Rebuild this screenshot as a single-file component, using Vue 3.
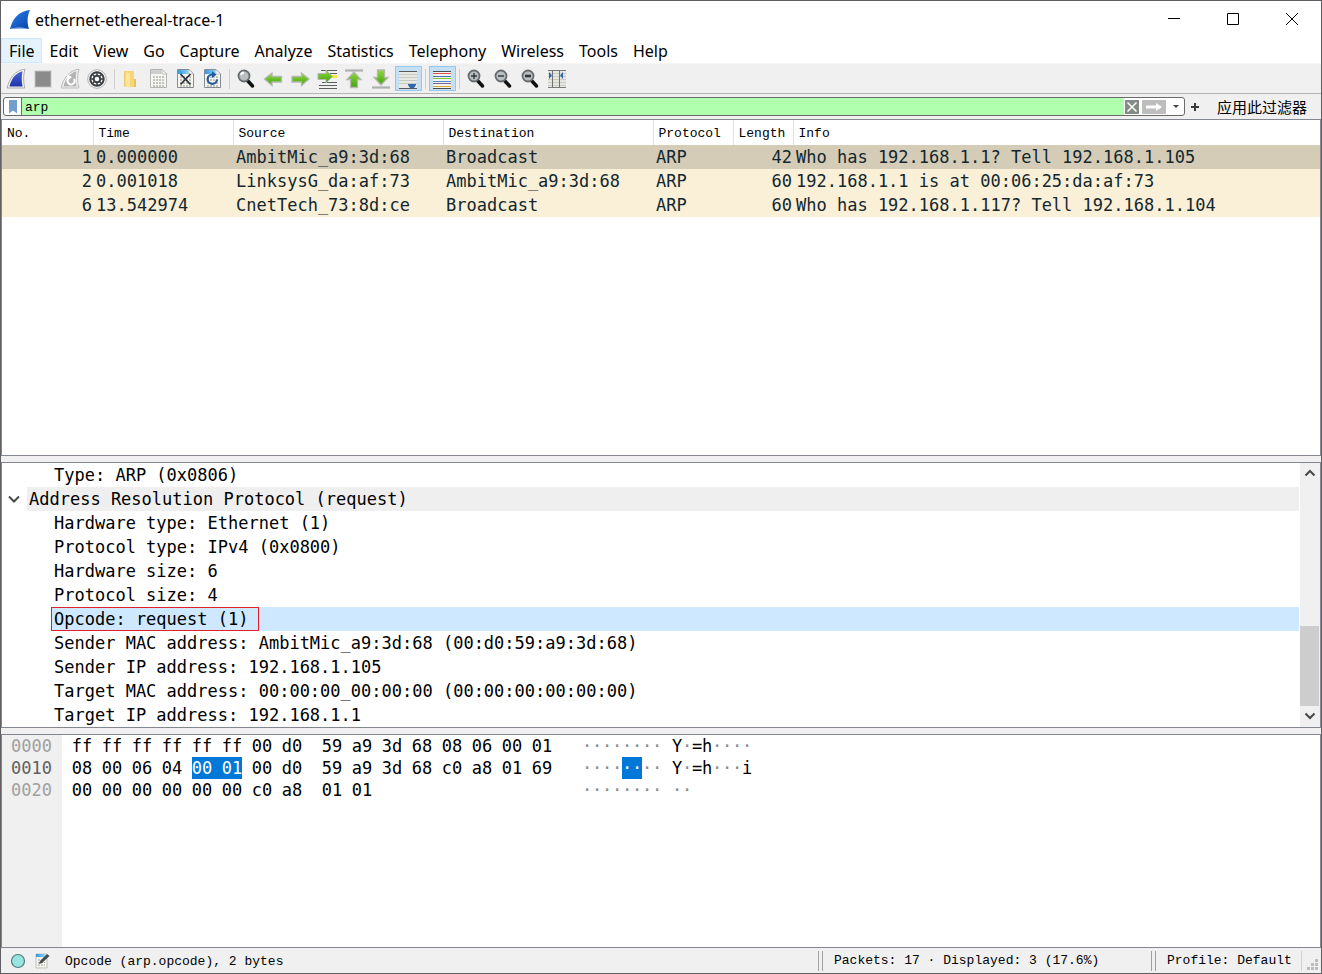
<script setup>
import { ref } from 'vue'

const menus = ['File', 'Edit', 'View', 'Go', 'Capture', 'Analyze', 'Statistics', 'Telephony', 'Wireless', 'Tools', 'Help']

const toolGroups = [
  [
    { id: 'start', label: 'Start capture' },
    { id: 'stop', label: 'Stop capture' },
    { id: 'restart', label: 'Restart capture' },
    { id: 'options', label: 'Capture options' },
  ],
  [
    { id: 'open', label: 'Open file' },
    { id: 'save', label: 'Save file' },
    { id: 'close', label: 'Close file' },
    { id: 'reload', label: 'Reload file' },
  ],
  [
    { id: 'find', label: 'Find packet' },
    { id: 'back', label: 'Previous packet' },
    { id: 'forward', label: 'Next packet' },
    { id: 'goto', label: 'Go to packet' },
    { id: 'first', label: 'First packet' },
    { id: 'last', label: 'Last packet' },
    { id: 'autoscroll', label: 'Auto scroll', on: true },
  ],
  [{ id: 'colorize', label: 'Colorize', on: true }],
  [
    { id: 'zoomin', label: 'Zoom in' },
    { id: 'zoomout', label: 'Zoom out' },
    { id: 'zoomreset', label: 'Normal size' },
    { id: 'columns', label: 'Resize columns' },
  ],
]

const filter = ref('arp')

const packets = [
  { no: 1, time: '0.000000', src: 'AmbitMic_a9:3d:68', dst: 'Broadcast', proto: 'ARP', len: 42, info: 'Who has 192.168.1.1? Tell 192.168.1.105', selected: true },
  { no: 2, time: '0.001018', src: 'LinksysG_da:af:73', dst: 'AmbitMic_a9:3d:68', proto: 'ARP', len: 60, info: '192.168.1.1 is at 00:06:25:da:af:73' },
  { no: 6, time: '13.542974', src: 'CnetTech_73:8d:ce', dst: 'Broadcast', proto: 'ARP', len: 60, info: 'Who has 192.168.1.117? Tell 192.168.1.104' },
]

const details = [
  { text: 'Type: ARP (0x0806)' },
  { text: 'Address Resolution Protocol (request)', head: true },
  { text: 'Hardware type: Ethernet (1)' },
  { text: 'Protocol type: IPv4 (0x0800)' },
  { text: 'Hardware size: 6' },
  { text: 'Protocol size: 4' },
  { text: 'Opcode: request (1)', selected: true },
  { text: 'Sender MAC address: AmbitMic_a9:3d:68 (00:d0:59:a9:3d:68)' },
  { text: 'Sender IP address: 192.168.1.105' },
  { text: 'Target MAC address: 00:00:00_00:00:00 (00:00:00:00:00:00)' },
  { text: 'Target IP address: 192.168.1.1' },
]

const markFrom = 20
const markTo = 21

const dump = [
  { hex: 'ff ff ff ff ff ff 00 d0 59 a9 3d 68 08 06 00 01', ascii: '········Y·=h····' },
  { hex: '08 00 06 04 00 01 00 d0 59 a9 3d 68 c0 a8 01 69', ascii: '········Y·=h···i' },
  { hex: '00 00 00 00 00 00 c0 a8 01 01', ascii: '··········' },
].map((row, r) => ({
  offset: (r * 16).toString(16).padStart(4, '0'),
  active: markFrom >= r * 16 && markFrom < r * 16 + 16,
  bytes: row.hex.split(' ').map((t, i) => {
    const pos = r * 16 + i
    return { t, char: row.ascii[i], mark: pos >= markFrom && pos <= markTo, joined: pos >= markFrom && pos < markTo, half: i === 8 }
  }),
}))
</script>

<template>
  <div class="window">
    <svg class="defs" aria-hidden="true">
      <defs>
        <linearGradient id="gBlue" x1="0" y1="0" x2="1" y2="1"><stop offset="0" stop-color="#2a84f0" /><stop offset="1" stop-color="#0a3fa6" /></linearGradient>
        <linearGradient id="gFin" x1="0" y1="0" x2="0" y2="1"><stop offset="0" stop-color="#4a63d8" /><stop offset="1" stop-color="#1f35a8" /></linearGradient>
        <linearGradient id="gGreen" x1="0" y1="0" x2="0" y2="1"><stop offset="0" stop-color="#8fd83e" /><stop offset="1" stop-color="#45a30c" /></linearGradient>
        <linearGradient id="gSky" x1="0" y1="0" x2="1" y2="0"><stop offset="0" stop-color="#2f9be0" /><stop offset="1" stop-color="#8fd0f4" /></linearGradient>
      </defs>
    </svg>

    <header class="titlebar">
      <svg class="logo" viewBox="0 0 20 20" aria-hidden="true">
        <path d="M0 19C2 10 8 1 20 0C17 6 17 13 19 19Z" fill="url(#gBlue)" />
        <path d="M0 19C6 17 13 17 19 19Z" fill="#8db6e6" />
      </svg>
      <h1>ethernet-ethereal-trace-1</h1>
      <div class="caption">
        <button type="button" aria-label="Minimize"><svg viewBox="0 0 12 12"><path d="M0 5.5H12" /></svg></button>
        <button type="button" aria-label="Maximize"><svg viewBox="0 0 12 12"><path d="M.5 .5H11.5V11.5H.5Z" /></svg></button>
        <button type="button" aria-label="Close"><svg viewBox="0 0 12 12"><path d="M0 0L12 12M12 0L0 12" /></svg></button>
      </div>
    </header>

    <nav class="menubar">
      <button v-for="(m, i) in menus" :key="m" type="button" :class="{ hot: i === 0 }">{{ m }}</button>
    </nav>

    <div class="toolbar" role="toolbar">
      <div v-for="(group, gi) in toolGroups" :key="gi" class="group">
        <button v-for="tool in group" :key="tool.id" type="button" :class="{ on: tool.on }" :aria-label="tool.label">
          <svg viewBox="0 0 21 21" aria-hidden="true">
            <template v-if="tool.id === 'start'">
              <path d="M1.2 20C3 11 9 2 19 1.2C17 7 17.3 14 18.8 20Z" fill="#f4f4f4" stroke="#aaa" />
              <path d="M3.5 18.5C5 11 10 4.5 16.5 3.2C15.5 8 15.5 13.5 16.6 18.5Z" fill="url(#gFin)" />
            </template>
            <template v-else-if="tool.id === 'stop'">
              <rect x="1" y="2" width="18" height="18" fill="#dedede" />
              <rect x="2.5" y="3.5" width="15" height="15" fill="#8b8b8b" stroke="#a5a5a5" />
            </template>
            <template v-else-if="tool.id === 'restart'">
              <path d="M1.2 20C3 11 9 2 19 1.2C17 7 17.3 14 18.8 20Z" fill="#f2f2f2" stroke="#bbb" />
              <path d="M3.5 18.5C5 11 10 4.5 16.5 3.2C15.5 8 15.5 13.5 16.6 18.5Z" fill="#b3b3b3" />
              <path d="M8.5 10.5A3.5 3.5 0 1 0 14 11" fill="none" stroke="#fff" stroke-width="2" />
              <path d="M7 6.5L12 9L8 12.5Z" fill="#fff" />
            </template>
            <template v-else-if="tool.id === 'options'">
              <circle cx="10" cy="11" r="9.3" fill="#fafafa" stroke="#b0b0b0" />
              <circle cx="10" cy="11" r="6.7" fill="none" stroke="#3b3f41" stroke-width="2" />
              <circle cx="10" cy="11" r="3.3" fill="#fff" stroke="#3b3f41" stroke-width="2" />
              <path d="M10 5V8M10 14V17M4 11H7M13 11H16M6 7L7.5 8.5M12.5 13.5L14 15M14 7L12.5 8.5M6 15L7.5 13.5" stroke="#3b3f41" stroke-width="1.5" />
            </template>
            <template v-else-if="tool.id === 'open'">
              <path d="M3 3H13V11H15V19H4Z" fill="#f6d478" />
              <path d="M13 11H15V19H13Z" fill="#e9c05a" />
              <path d="M3 3L9 6V20L3 18Z" fill="#ffe49b" />
              <path d="M3 3H4.500V19L3 18Z" fill="#f0c96b" />
            </template>
            <template v-else-if="tool.id === 'save' || tool.id === 'close' || tool.id === 'reload'">
              <path d="M2.5 1.5H14L18.5 6V19.500H2.5Z" fill="#f7f7f2" :stroke="tool.id === 'save' ? '#b5b5b5' : '#858b90'" />
              <path v-if="tool.id === 'save'" d="M3 2H13.5V6H3Z" fill="#cecece" />
              <path v-else d="M3 2H13.5V6H3Z" fill="url(#gSky)" />
              <path d="M14 1.5V6H18.5Z" fill="#fff" stroke="#aaa" stroke-width=".7" />
              <path d="M5 9H16M5 12H16M5 15H16M5 18H16" stroke="#c3c3bd" stroke-width="2" stroke-dasharray="2 1" />
              <path v-if="tool.id === 'close'" d="M5.5 6L15.5 16.5M15.5 6L5.5 16.5" stroke="#29333a" stroke-width="1.8" />
              <template v-if="tool.id === 'reload'">
                <path d="M15 11.500A4.700 4.700 0 1 1 10.500 6.500" fill="none" stroke="#245a9c" stroke-width="2.2" />
                <path d="M10 3L14.500 6.700L10 10Z" fill="#245a9c" />
              </template>
            </template>
            <template v-else-if="['find', 'zoomin', 'zoomout', 'zoomreset'].includes(tool.id)">
              <path d="M11 12L16.5 18" stroke="#111" stroke-width="3.5" stroke-linecap="round" />
              <circle cx="8" cy="8" r="5.5" fill="#b9bec1" stroke="#656b6e" stroke-width="1.8" />
              <path v-if="tool.id === 'find'" d="M5 7Q5.5 4.5 8 4.5" fill="none" stroke="#fff" stroke-width="2" />
              <path v-if="tool.id === 'zoomin'" d="M5 8H11M8 5V11" stroke="#303638" stroke-width="1.4" />
              <path v-if="tool.id === 'zoomout'" d="M5 8H11" stroke="#303638" stroke-width="1.4" />
              <path v-if="tool.id === 'zoomreset'" d="M5 8H11" stroke="#303638" stroke-width="2.600" />
            </template>
            <path v-else-if="tool.id === 'back'" d="M1.5 11L9 5V8.5H18.5V14H9V17.5Z" fill="url(#gGreen)" stroke="#b4b8b0" stroke-width="1.3" />
            <path v-else-if="tool.id === 'forward'" d="M19 11L11.5 5V8.5H2V14H11.5V17.5Z" fill="url(#gGreen)" stroke="#b4b8b0" stroke-width="1.3" />
            <template v-else-if="tool.id === 'goto'">
              <path d="M4 2.5H20M4 5.5H20M5 14.5H20M2 17.5H20M2 20.5H20" stroke="#5b5f60" stroke-width="1.2" />
              <path d="M14 7H20V10H14Z" fill="#f7e84a" />
              <path d="M15.5 8.5L9 2V5.5H1V11.5H9V15Z" fill="url(#gGreen)" stroke="#b4b8b0" />
            </template>
            <template v-else-if="tool.id === 'first'">
              <path d="M1 2.5H19" stroke="#aeb0ae" stroke-width="2.2" />
              <path d="M10 4L17 11.5H13.5V19.5H6.5V11.5H3Z" fill="url(#gGreen)" stroke="#b4b8b0" stroke-width="1.3" />
            </template>
            <template v-else-if="tool.id === 'last'">
              <path d="M1 19.5H19" stroke="#aeb0ae" stroke-width="2.2" />
              <path d="M10 17L17 9.500H13.5V2H6.5V9.500H3Z" fill="url(#gGreen)" stroke="#b4b8b0" stroke-width="1.3" />
            </template>
            <template v-else-if="tool.id === 'autoscroll'">
              <path d="M1 3H19V20H1Z" fill="#e7e9e2" />
              <path d="M1 6.5H19M1 9.5H19M1 12.5H19M1 15.5H19" stroke="#c7c9c2" />
              <path d="M1 3.500H19M1 20.500H19" stroke="#555a5c" />
              <path d="M10 16H18V17L16 20H12L10 17Z" fill="#2f66ae" />
            </template>
            <template v-else-if="tool.id === 'colorize'">
              <path d="M1 3H19V21H1Z" fill="#f4f4ee" />
              <path d="M1 3.500H19M1 20.500H19" stroke="#4a4e50" />
              <path d="M1 5.500H19" stroke="#e0524c" />
              <path d="M1 8.500H19" stroke="#4674bc" />
              <path d="M1 10.500H19" stroke="#79c832" />
              <path d="M1 13.500H19" stroke="#4f86c6" />
              <path d="M1 15.500H19" stroke="#78649a" />
              <path d="M1 18.500H19" stroke="#d2a82d" />
            </template>
            <template v-else>
              <path d="M1 2H19V20H1Z" fill="#e5e6e0" />
              <path d="M1 5.5H19M1 8.5H19M1 11.5H19M1 14.5H19M1 17.5H19" stroke="#cbccc6" />
              <path d="M1 2.5H19M1 19.5H19" stroke="#777b7c" />
              <path d="M5.5 2V20M12.5 2V20" stroke="#6d7172" />
              <path d="M2 4L5 7.5L2 11ZM16 4L13 7.5L16 11Z" fill="#2f66ae" />
            </template>
          </svg>
        </button>
      </div>
    </div>

    <form class="filterbar" @submit.prevent>
      <div class="filterbox">
        <button type="button" class="bookmark" aria-label="Bookmarks"><svg viewBox="0 0 10 14"><path d="M1 0H9V13.5L5 10.5L1 13.5Z" fill="#729fcf" /></svg></button>
        <input v-model="filter" type="text" aria-label="Display filter" spellcheck="false" />
        <button type="button" class="clear" aria-label="Clear filter"><svg viewBox="0 0 14 14"><path d="M0 0H14V14H0Z" fill="#858b85" /><path d="M2.5 2.5L11.5 11.5M11.5 2.5L2.5 11.5" stroke="#fff" stroke-width="1.5" /></svg></button>
        <button type="submit" class="go" aria-label="Apply filter"><svg viewBox="0 0 24 14"><rect width="24" height="14" rx="1" fill="#bdbdbd" /><path d="M4 5.5H14V3L20 7L14 11V8.500H4Z" fill="#fff" /></svg></button>
        <button type="button" class="drop" aria-label="Filter history"><svg viewBox="0 0 8 5"><path d="M1 1H7L4 4Z" fill="#444" /></svg></button>
      </div>
      <button type="button" class="plus" aria-label="Add filter button"><svg viewBox="0 0 8 8"><path d="M0 4H8M4 0V8" stroke="#3c3c3c" stroke-width="2" /></svg></button>
      <button type="button" class="apply">应用此过滤器</button>
    </form>

    <main class="panes">
      <section class="pane list">
        <table>
          <colgroup><col class="c-no" /><col class="c-time" /><col class="c-addr" /><col class="c-addr" /><col class="c-proto" /><col class="c-len" /><col /></colgroup>
          <thead>
            <tr><th>No.</th><th>Time</th><th>Source</th><th>Destination</th><th>Protocol</th><th>Length</th><th>Info</th></tr>
          </thead>
          <tbody>
            <tr v-for="p in packets" :key="p.no" :class="{ selected: p.selected }">
              <td class="num">{{ p.no }}</td><td>{{ p.time }}</td><td>{{ p.src }}</td><td>{{ p.dst }}</td><td>{{ p.proto }}</td><td class="num">{{ p.len }}</td><td>{{ p.info }}</td>
            </tr>
          </tbody>
        </table>
      </section>

      <section class="pane tree">
        <ul>
          <li v-for="d in details" :key="d.text" :class="{ head: d.head, selected: d.selected }">
            <button v-if="d.head" type="button" class="twisty" aria-label="Collapse"><svg viewBox="0 0 12 8"><path d="M1 1.5L6 6.5L11 1.5" /></svg></button>
            <span class="line"><span class="label">{{ d.text }}</span></span>
          </li>
        </ul>
        <div class="scrollbar">
          <button type="button" aria-label="Scroll up"><svg viewBox="0 0 12 8"><path d="M1.5 6.5L6 2L10.5 6.5" /></svg></button>
          <div class="track"><div class="thumb"></div></div>
          <button type="button" aria-label="Scroll down"><svg viewBox="0 0 12 8"><path d="M1.5 1.5L6 6L10.5 1.5" /></svg></button>
        </div>
      </section>

      <section class="pane bytes">
        <div class="offsets"><div v-for="r in dump" :key="r.offset" :class="{ active: r.active }">{{ r.offset }}</div></div>
        <div class="hex">
          <div v-for="r in dump" :key="r.offset" class="row">
            <span v-for="(b, i) in r.bytes" :key="i" :class="{ mark: b.mark, joined: b.joined, half: b.half }">{{ b.t }}</span>
          </div>
        </div>
        <div class="ascii">
          <div v-for="r in dump" :key="r.offset" class="row">
            <span v-for="(b, i) in r.bytes" :key="i" :class="{ dim: b.char === '·', mark: b.mark, half: b.half }">{{ b.char }}</span>
          </div>
        </div>
      </section>
    </main>

    <footer class="status">
      <button type="button" aria-label="Expert information"><svg viewBox="0 0 16 16"><circle cx="8" cy="8" r="6.5" fill="#98e4df" stroke="#527d7e" stroke-width="1.2" /></svg></button>
      <button type="button" aria-label="Capture comment">
        <svg viewBox="0 0 16 16"><path d="M2 1H13V15H2Z" fill="#f4f4ee" stroke="#c3c3bd" /><path d="M2 1H11V4H2Z" fill="url(#gSky)" /><path d="M4 7H11M4 9.5H11M4 12H11" stroke="#a5a59f" stroke-dasharray="2 1" /><path d="M5 11L6 8L13 1L15.5 3L8 10Z" fill="#454c4d" /></svg>
      </button>
      <span class="message">Opcode (arp.opcode), 2 bytes</span>
      <span class="cell count">Packets: 17 · Displayed: 3 (17.6%)</span>
      <span class="cell profile">Profile: Default</span>
      <svg class="grip" viewBox="0 0 11 11" aria-hidden="true"><path d="M8 0h3v3h-3zM4 4h3v3h-3zM8 4h3v3h-3zM0 8h3v3h-3zM4 8h3v3h-3zM8 8h3v3h-3z" fill="#bcbcbc" /></svg>
    </footer>
  </div>
</template>

<style>
body { margin: 0; }
</style>

<style scoped>
* { box-sizing: border-box; }
button { margin: 0; padding: 0; border: 0; background: none; color: inherit; font: inherit; display: flex; align-items: center; justify-content: center; }
.window { height: 100vh; display: flex; flex-direction: column; border: 1px solid #606062; background: #f0f0f0; color: #000; font: 16px "Noto Sans", "Open Sans", sans-serif; overflow: hidden; }
.defs { position: absolute; width: 0; height: 0; }
.titlebar { flex: none; height: 37px; display: flex; align-items: center; background: #fff; padding-left: 9px; }
.logo { width: 20px; height: 20px; margin-right: 5px; }
h1 { margin: 0; flex: 1; font-size: 16px; font-weight: 400; }
.caption { display: flex; align-self: stretch; }
.caption button { width: 59px; height: 36px; }
.caption svg { width: 12px; height: 12px; fill: none; stroke: #000; }
.menubar { flex: none; height: 26px; display: flex; background: #fff; border-bottom: 1px solid #f5f5f5; }
.menubar button { padding: 0 6px 0 7px; border: 1px solid transparent; }
.menubar .hot { background: #e5f3ff; border-color: #cce8ff; }
.toolbar { flex: none; height: 30px; display: flex; align-items: center; padding-left: 2px; border-bottom: 1px solid #b4b4b4; }
.group { display: flex; align-items: center; }
.group + .group::before { content: ""; width: 1px; height: 20px; margin: 0 3px; background: #cfcfcf; }
.toolbar button { width: 27px; height: 25px; border: 1px solid transparent; }
.toolbar button.on { background: #c5dff4; border-color: #90c8f6; }
.toolbar svg { width: 21px; height: 21px; flex: none; }
.filterbar { flex: none; height: 25px; display: flex; align-items: center; padding: 0 14px 0 2px; }
.filterbox { flex: 1; display: flex; align-items: stretch; height: 19px; border: 1px solid #6a6a6a; border-radius: 3px; background: #fff; overflow: hidden; }
.bookmark { width: 18px; border-right: 1px solid #6a6a6a; }
.bookmark svg { width: 10px; height: 14px; }
.filterbox input { flex: 1; min-width: 0; border: 0; outline: 0; padding: 2px 3px 0; background: #afffaf; color: #000; font: 13px "Liberation Mono", monospace; }
.clear { width: 16px; }
.clear svg { width: 14px; height: 14px; }
.go { width: 28px; }
.go svg { width: 24px; height: 14px; }
.drop { width: 16px; }
.drop svg { width: 8px; height: 5px; }
.plus { width: 20px; }
.plus svg { width: 8px; height: 8px; }
.apply { margin-left: 12px; font: 15px "Liberation Sans", "Noto Sans CJK SC", sans-serif; }
.panes { flex: 1; min-height: 0; display: flex; flex-direction: column; gap: 6px; font: 17px "DejaVu Sans Mono", monospace; }
.pane { min-height: 0; background: #fff; border: 1px solid #828790; overflow: hidden; }
.list { flex: 337 1 0; }
.tree { flex: 266 1 0; display: flex; }
.bytes { flex: 214 1 0; display: flex; line-height: 22px; }
table { width: 100%; table-layout: fixed; border-collapse: collapse; }
.c-no { width: 91px; }
.c-time { width: 140px; }
.c-addr { width: 210px; }
.c-proto { width: 80px; }
.c-len { width: 60px; }
th { height: 25px; padding: 2px 5px 0; border-right: 1px solid #e2e2e2; text-align: left; font: 13px "Liberation Mono", monospace; }
th:last-child { border-right: 0; }
td { height: 24px; padding: 0 3px; line-height: 24px; white-space: nowrap; }
tbody tr { background: #faf0d7; color: #12272e; }
tbody tr.selected { background: #d5ccb7; }
.num { text-align: right; padding: 0 1px; }
ul { flex: 1; margin: 0; padding: 0 1px 0 0; list-style: none; }
li { display: flex; height: 24px; line-height: 24px; padding-left: 49px; white-space: nowrap; }
li.head { padding-left: 0; }
.twisty { width: 25px; padding-right: 2px; }
.twisty svg, .scrollbar svg { width: 12px; height: 8px; fill: none; stroke: #484848; stroke-width: 2; }
.line { flex: 1; display: flex; }
.label { padding: 0 3px; }
.head .label { padding-left: 2px; }
.head .line { background: #efefef; }
.selected .line { background: #cde8ff; }
.selected .label { width: 208px; padding: 0 2px; line-height: 22px; border: 1px solid #e0202c; }
.scrollbar { width: 20px; display: flex; flex-direction: column; background: #f0f0f0; }
.scrollbar button { height: 21px; }
.track { flex: 1; display: flex; flex-direction: column; justify-content: flex-end; }
.thumb { height: 36%; margin-right: 1px; background: #cdcdcd; }
.offsets { width: 60px; padding-left: 9px; background: #f0f0f0; color: #a0a0a0; }
.offsets .active { color: #606060; }
.hex { width: 510px; padding-left: 10px; }
.ascii { padding-left: 10px; }
.row { display: flex; }
.row span { text-align: center; display: flex; justify-content: center; }
.hex span { width: 20px; margin-right: 10px; }
.ascii span { width: 10px; }
.row .half { margin-left: 10px; }
.dim { color: #8c8c8c; }
.mark { background: #0078d7; color: #fff; }
.hex .joined { width: 30px; margin-right: 0; padding-right: 10px; }
.status { flex: none; height: 25px; display: flex; align-items: center; padding-left: 9px; font: 13px "Liberation Mono", monospace; }
.status button { margin-right: 8px; }
.status svg { width: 16px; height: 16px; }
.message { flex: 1; padding: 2px 0 0 7px; }
.cell { display: flex; align-items: center; height: 20px; padding-left: 11px; border-left: 1px solid #a0a0a0; white-space: nowrap; }
.cell::before { content: ""; width: 1px; height: 20px; margin-left: -8px; margin-right: 11px; background: #a0a0a0; }
.count { width: 333px; }
.profile { width: 151px; border-right: 1px solid #d2d2d2; }
.status .grip { width: 11px; height: 11px; margin: 0 3px 3px 5px; align-self: flex-end; }
</style>
